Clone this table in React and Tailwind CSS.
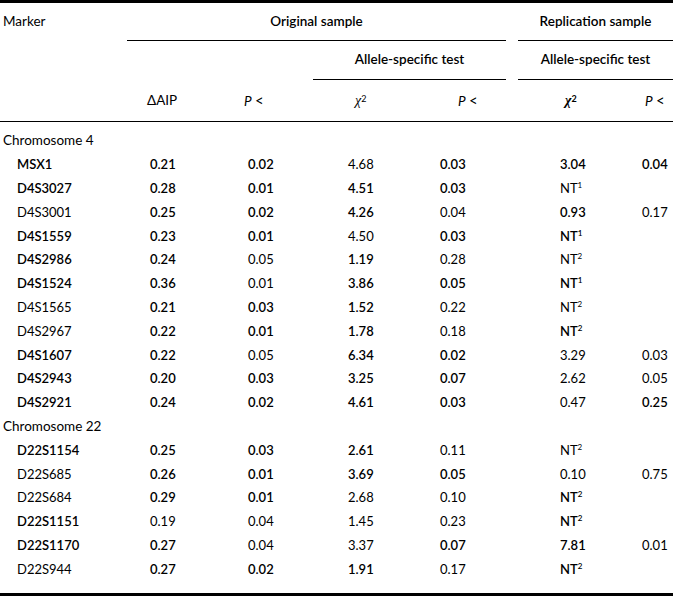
const cols = "grid grid-cols-[127px_93px_93px_97px_96px_12px_92px_63px]";

// [marker, bold, dAIP, b, p, b, chi, b, p2, b, repChi, b, repP, b]
const chrom4 = [
  ["MSX1", 1, "0.21", 1, "0.02", 1, "4.68", 0, "0.03", 1, "3.04", 1, "0.04", 1],
  ["D4S3027", 1, "0.28", 1, "0.01", 1, "4.51", 1, "0.03", 1, "NT1", 0, "", 0],
  ["D4S3001", 0, "0.25", 1, "0.02", 1, "4.26", 1, "0.04", 0, "0.93", 1, "0.17", 0],
  ["D4S1559", 1, "0.23", 1, "0.01", 1, "4.50", 0, "0.03", 1, "NT1", 1, "", 0],
  ["D4S2986", 1, "0.24", 1, "0.05", 0, "1.19", 1, "0.28", 0, "NT2", 0, "", 0],
  ["D4S1524", 1, "0.36", 1, "0.01", 0, "3.86", 1, "0.05", 1, "NT1", 1, "", 0],
  ["D4S1565", 0, "0.21", 1, "0.03", 1, "1.52", 1, "0.22", 0, "NT2", 0, "", 0],
  ["D4S2967", 0, "0.22", 1, "0.01", 1, "1.78", 1, "0.18", 0, "NT2", 1, "", 0],
  ["D4S1607", 1, "0.22", 1, "0.05", 0, "6.34", 1, "0.02", 1, "3.29", 0, "0.03", 0],
  ["D4S2943", 1, "0.20", 1, "0.03", 1, "3.25", 1, "0.07", 1, "2.62", 0, "0.05", 0],
  ["D4S2921", 1, "0.24", 1, "0.02", 1, "4.61", 1, "0.03", 1, "0.47", 0, "0.25", 1],
];

const chrom22 = [
  ["D22S1154", 1, "0.25", 1, "0.03", 1, "2.61", 1, "0.11", 0, "NT2", 0, "", 0],
  ["D22S685", 0, "0.26", 1, "0.01", 1, "3.69", 1, "0.05", 1, "0.10", 0, "0.75", 0],
  ["D22S684", 0, "0.29", 1, "0.01", 1, "2.68", 0, "0.10", 0, "NT2", 1, "", 0],
  ["D22S1151", 1, "0.19", 0, "0.04", 0, "1.45", 0, "0.23", 0, "NT2", 1, "", 0],
  ["D22S1170", 1, "0.27", 1, "0.04", 0, "3.37", 0, "0.07", 1, "7.81", 1, "0.01", 0],
  ["D22S944", 0, "0.27", 1, "0.02", 1, "1.91", 1, "0.17", 0, "NT2", 1, "", 0],
];

function Val({ v, b }) {
  const w = b ? "font-semibold" : "font-normal";
  if (v.startsWith("NT")) {
    return (
      <span className={w}>
        NT<span className="text-[8px] align-top relative -top-[1px]">{v[2]}</span>
      </span>
    );
  }
  return <span className={w}>{v}</span>;
}

function Row({ r }) {
  return (
    <div className={`${cols} h-[23.8px] items-center`}>
      <div className={`pl-[17px] ${r[1] ? "font-semibold" : ""}`}>{r[0]}</div>
      <div className="pl-[23px]"><Val v={r[2]} b={r[3]} /></div>
      <div className="pl-[28px]"><Val v={r[4]} b={r[5]} /></div>
      <div className="pl-[35px]"><Val v={r[6]} b={r[7]} /></div>
      <div className="pl-[30px]"><Val v={r[8]} b={r[9]} /></div>
      <div></div>
      <div className="pl-[42px]"><Val v={r[10]} b={r[11]} /></div>
      <div className="pl-[32px]"><Val v={r[12]} b={r[13]} /></div>
    </div>
  );
}

function Group({ title, rows }) {
  return (
    <>
      <div className="h-[23.8px] flex items-center pl-[3px] text-[13.5px]">{title}</div>
      {rows.map((r) => (
        <Row key={r[0]} r={r} />
      ))}
    </>
  );
}

export default function App() {
  return (
    <div className="w-[673px] h-[596px] bg-white text-black text-[13px] font-['Lato',sans-serif] leading-none">
      <div className="border-t-[3px] border-b-[3px] border-black h-[596px]">
        {/* header row 1 */}
        <div className={`${cols} h-[37px] items-center text-[13.5px]`}>
          <div className="pl-[3px]">Marker</div>
          <div className="col-span-4 text-center font-semibold">Original sample</div>
          <div></div>
          <div className="col-span-2 text-center font-semibold">Replication sample</div>
        </div>
        <div className={cols}>
          <div></div>
          <div className="col-span-4 border-t border-black"></div>
          <div></div>
          <div className="col-span-2 border-t border-black"></div>
        </div>
        {/* header row 2 */}
        <div className={`${cols} h-[38px] items-center text-[13.5px]`}>
          <div className="col-span-3"></div>
          <div className="col-span-2 text-center font-semibold">Allele-specific test</div>
          <div></div>
          <div className="col-span-2 text-center font-semibold">Allele-specific test</div>
        </div>
        <div className={cols}>
          <div className="col-span-3"></div>
          <div className="col-span-2 border-t border-black"></div>
          <div></div>
          <div className="col-span-2 border-t border-black"></div>
        </div>
        {/* header row 3 */}
        <div className={`${cols} h-[42px] items-center border-b border-black text-[13.5px]`}>
          <div></div>
          <div className="pl-[20px]">ΔAIP</div>
          <div className="pl-[24px]"><span className="italic">P</span> <span className="text-[15px]">&lt;</span></div>
          <div className="pl-[42px] font-['Liberation_Serif',serif] italic text-[14px]">χ<span className="text-[9px] align-top not-italic font-['Lato',sans-serif]">2</span></div>
          <div className="pl-[48px]"><span className="italic">P</span> <span className="text-[15px]">&lt;</span></div>
          <div></div>
          <div className="pl-[47px] font-['Liberation_Serif',serif] italic font-bold text-[14px]">χ<span className="text-[9px] align-top not-italic font-['Lato',sans-serif]">2</span></div>
          <div className="pl-[35px]"><span className="italic">P</span> <span className="text-[15px]">&lt;</span></div>
        </div>
        <div className="pt-[7px]">
          <Group title="Chromosome 4" rows={chrom4} />
          <Group title="Chromosome 22" rows={chrom22} />
        </div>
      </div>
    </div>
  );
}
